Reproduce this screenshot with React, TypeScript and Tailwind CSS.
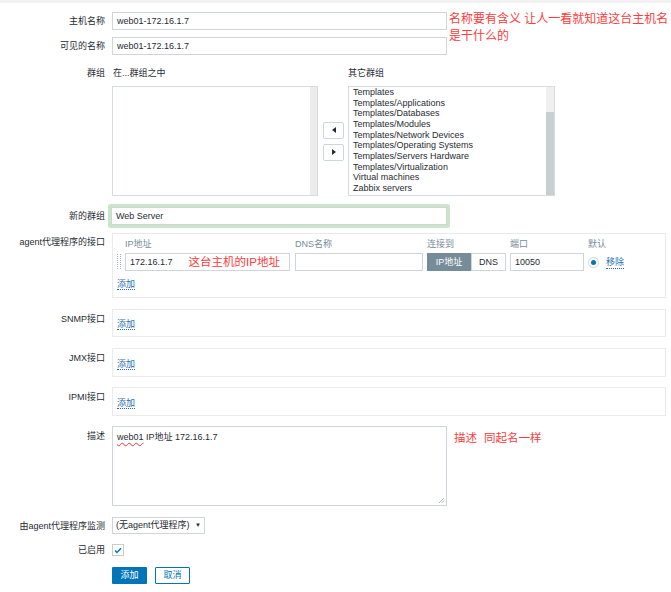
import { ReactNode } from 'react'

const font = { fontFamily: '"Liberation Sans", "Noto Sans CJK SC", sans-serif' }

const groups = [
  'Templates',
  'Templates/Applications',
  'Templates/Databases',
  'Templates/Modules',
  'Templates/Network Devices',
  'Templates/Operating Systems',
  'Templates/Servers Hardware',
  'Templates/Virtualization',
  'Virtual machines',
  'Zabbix servers',
]

function Label({ children, className = '' }: { children: ReactNode; className?: string }) {
  return (
    <div className={`w-[105px] shrink-0 text-right text-[9px] leading-[12px] text-[#1f2c33] ${className}`}>
      {children}
    </div>
  )
}

function AddLink() {
  return (
    <span className="text-[9px] leading-[12px] text-[#1f6fb2] border-b border-dotted border-[#1f6fb2]">添加</span>
  )
}

function Box({ children, className = '' }: { children?: ReactNode; className?: string }) {
  return <div className={`w-[554px] border border-[#ebebeb] text-[9px] leading-[12px] ${className}`}>{children}</div>
}

function Annot({ children, className = '' }: { children: ReactNode; className?: string }) {
  return <div className={`text-[#ff3b3b] ${className}`}>{children}</div>
}

export default function App() {
  return (
    <div className="w-[671px] h-[592px] bg-white overflow-hidden" style={font}>
      <div className="h-[3px] bg-[#f2f2f2]" />

      {/* 主机名称 */}
      <div className="flex items-center mt-[9px] h-[18px]">
        <Label>主机名称</Label>
        <div className="ml-[7px] w-[335px] h-[18px] border border-[#cfd6db] px-[4px] text-[9px] leading-[16px] text-[#1f2c33]">
          web01-172.16.1.7
        </div>
        <Annot className="ml-[2px] text-[12px] whitespace-nowrap self-start leading-[17px] -mt-[1px] h-[18px] overflow-visible">
          名称要有含义 让人一看就知道这台主机名
          <br />
          是干什么的
        </Annot>
      </div>

      {/* 可见的名称 */}
      <div className="flex items-center mt-[7px]">
        <Label>可见的名称</Label>
        <div className="ml-[7px] w-[335px] h-[18px] border border-[#cfd6db] px-[4px] text-[9px] leading-[16px] text-[#1f2c33]">
          web01-172.16.1.7
        </div>
      </div>

      {/* 群组 */}
      <div className="flex mt-[11px]">
        <Label className="pt-[1px]">群组</Label>
        <div className="ml-[7px] flex flex-col">
          <div className="flex h-[14px] text-[9px] leading-[14px] text-[#1f2c33]">
            <div className="w-[236px] pl-[1px]">在...群组之中</div>
            <div>其它群组</div>
          </div>
          <div className="flex items-center mt-[6px]">
            <div className="w-[206px] h-[110px] border border-[#d5dbdf] flex justify-end">
              <div className="w-[7px] h-full bg-[#ececec]" />
            </div>
            <div className="ml-[5px] flex flex-col gap-[5px]">
              <div className="w-[21px] h-[17px] border border-[#cfd6db] rounded-[2px] flex items-center justify-center">
                <div className="w-0 h-0 border-y-[3px] border-y-transparent border-r-[4px] border-r-[#1f2c33]" />
              </div>
              <div className="w-[21px] h-[17px] border border-[#cfd6db] rounded-[2px] flex items-center justify-center">
                <div className="w-0 h-0 border-y-[3px] border-y-transparent border-l-[4px] border-l-[#1f2c33]" />
              </div>
            </div>
            <div className="ml-[4px] w-[207px] h-[110px] border border-[#d5dbdf] flex">
              <div className="flex-1 pl-[4px] text-[9px] leading-[10.67px] text-[#1f2c33]">
                {groups.map((g) => (
                  <div key={g}>{g}</div>
                ))}
              </div>
              <div className="w-[8px] h-full bg-[#f0f0f0] flex flex-col">
                <div className="h-[25px]" />
                <div className="flex-1 bg-[#c9ced1]" />
              </div>
            </div>
          </div>
        </div>
      </div>

      {/* 新的群组 */}
      <div className="flex items-center mt-[8px]">
        <Label>新的群组</Label>
        <div className="ml-[3px] p-[3px] bg-[#cbe5c8] rounded-[2px]">
          <div className="w-[336px] h-[18px] border border-[#cfd6db] bg-white px-[4px] text-[9px] leading-[16px] text-[#1f2c33]">
            Web Server
          </div>
        </div>
      </div>

      {/* agent */}
      <div className="flex mt-[5px]">
        <Label className="pt-[3px]">agent代理程序的接口</Label>
        <Box className="ml-[7px] h-[65px] pl-[4px]">
          <div className="flex h-[14px] mt-[3px] text-[9px] leading-[14px] text-[#768d99]">
            <div className="w-[178px] pl-[8px]">IP地址</div>
            <div className="w-[132px]">DNS名称</div>
            <div className="w-[83px]">连接到</div>
            <div className="w-[78px]">端口</div>
            <div>默认</div>
          </div>
          <div className="flex items-center mt-[2px] h-[18px]">
            <div className="w-[4px] h-[17px] grid grid-cols-2 gap-x-[1px] gap-y-[1px] content-start">
              {Array.from({ length: 16 }).map((_, i) => (
                <div key={i} className="w-[1px] h-[1px] bg-[#a9b4ba]" />
              ))}
            </div>
            <div className="ml-[4px] w-[165px] h-[18px] border border-[#cfd6db] flex items-center px-[4px]">
              <span className="text-[9px] text-[#1f2c33]">172.16.1.7</span>
              <span className="ml-[16px] text-[11.5px] text-[#ff3b3b]">这台主机的IP地址</span>
            </div>
            <div className="ml-[5px] w-[128px] h-[18px] border border-[#cfd6db]" />
            <div className="ml-[4px] flex h-[18px] text-[9px]">
              <div className="w-[44px] bg-[#768d99] text-white flex items-center justify-center">IP地址</div>
              <div className="w-[35px] border border-[#cfd6db] text-[#1f2c33] flex items-center justify-center">DNS</div>
            </div>
            <div className="ml-[4px] w-[74px] h-[18px] border border-[#cfd6db] px-[4px] text-[9px] leading-[16px] text-[#1f2c33]">
              10050
            </div>
            <div className="ml-[4px] w-[11px] h-[11px] rounded-full border border-[#cfd6db] flex items-center justify-center">
              <div className="w-[5px] h-[5px] rounded-full bg-[#0275b8]" />
            </div>
            <span className="ml-[7px] text-[9px] leading-[12px] text-[#1f6fb2] border-b border-dotted border-[#1f6fb2]">移除</span>
          </div>
          <div className="mt-[7px]">
            <AddLink />
          </div>
        </Box>
      </div>

      {/* SNMP / JMX / IPMI */}
      <div className="flex mt-[11px]">
        <Label className="pt-[4px]">SNMP接口</Label>
        <Box className="ml-[7px] h-[28px] pl-[4px] pt-[8px]">
          <AddLink />
        </Box>
      </div>
      <div className="flex mt-[11px]">
        <Label className="pt-[4px]">JMX接口</Label>
        <Box className="ml-[7px] h-[29px] pl-[4px] pt-[9px]">
          <AddLink />
        </Box>
      </div>
      <div className="flex mt-[10px]">
        <Label className="pt-[4px]">IPMI接口</Label>
        <Box className="ml-[7px] h-[29px] pl-[4px] pt-[9px]">
          <AddLink />
        </Box>
      </div>

      {/* 描述 */}
      <div className="flex mt-[10px]">
        <Label className="pt-[4px]">描述</Label>
        <div className="ml-[7px] relative w-[335px] h-[80px] border border-[#cfd6db] px-[4px] pt-[4px] text-[9px] leading-[12px] text-[#1f2c33]">
          <span className="underline decoration-wavy decoration-[#e33] decoration-[1px] underline-offset-[2px]">web01</span> IP地址 172.16.1.7
          <svg className="absolute right-[1px] bottom-[1px]" width="7" height="7" viewBox="0 0 7 7">
            <path d="M6 1L1 6M6 3.5L3.5 6" stroke="#9aa" strokeWidth="0.8" />
          </svg>
        </div>
        <Annot className="ml-[7px] mt-[4px] text-[11.5px] leading-[17px]">
          描述<span className="ml-[7px]">同起名一样</span>
        </Annot>
      </div>

      {/* 由agent代理程序监测 */}
      <div className="flex items-center mt-[11px]">
        <Label>由agent代理程序监测</Label>
        <div className="ml-[7px] w-[93px] h-[17px] border border-[#cfd6db] flex items-center px-[3px] text-[9px] text-[#1f2c33]">
          <span>(无agent代理程序)</span>
          <span className="ml-auto text-[6px]">▼</span>
        </div>
      </div>

      {/* 已启用 */}
      <div className="flex items-center mt-[10px]">
        <Label>已启用</Label>
        <div className="ml-[7px] w-[12px] h-[12px] border border-[#c4cdd2] flex items-center justify-center">
          <svg width="8" height="7" viewBox="0 0 8 7">
            <path d="M1 3.5L3 5.5L7 1.2" fill="none" stroke="#0275b8" strokeWidth="1.5" />
          </svg>
        </div>
      </div>

      {/* buttons */}
      <div className="flex mt-[11px] ml-[112px] gap-[8px]">
        <div className="w-[35px] h-[17px] bg-[#0275b8] rounded-[1px] text-white text-[9px] flex items-center justify-center">添加</div>
        <div className="w-[35px] h-[17px] border border-[#0275b8] rounded-[1px] text-[#0275b8] text-[9px] flex items-center justify-center">取消</div>
      </div>
    </div>
  )
}
